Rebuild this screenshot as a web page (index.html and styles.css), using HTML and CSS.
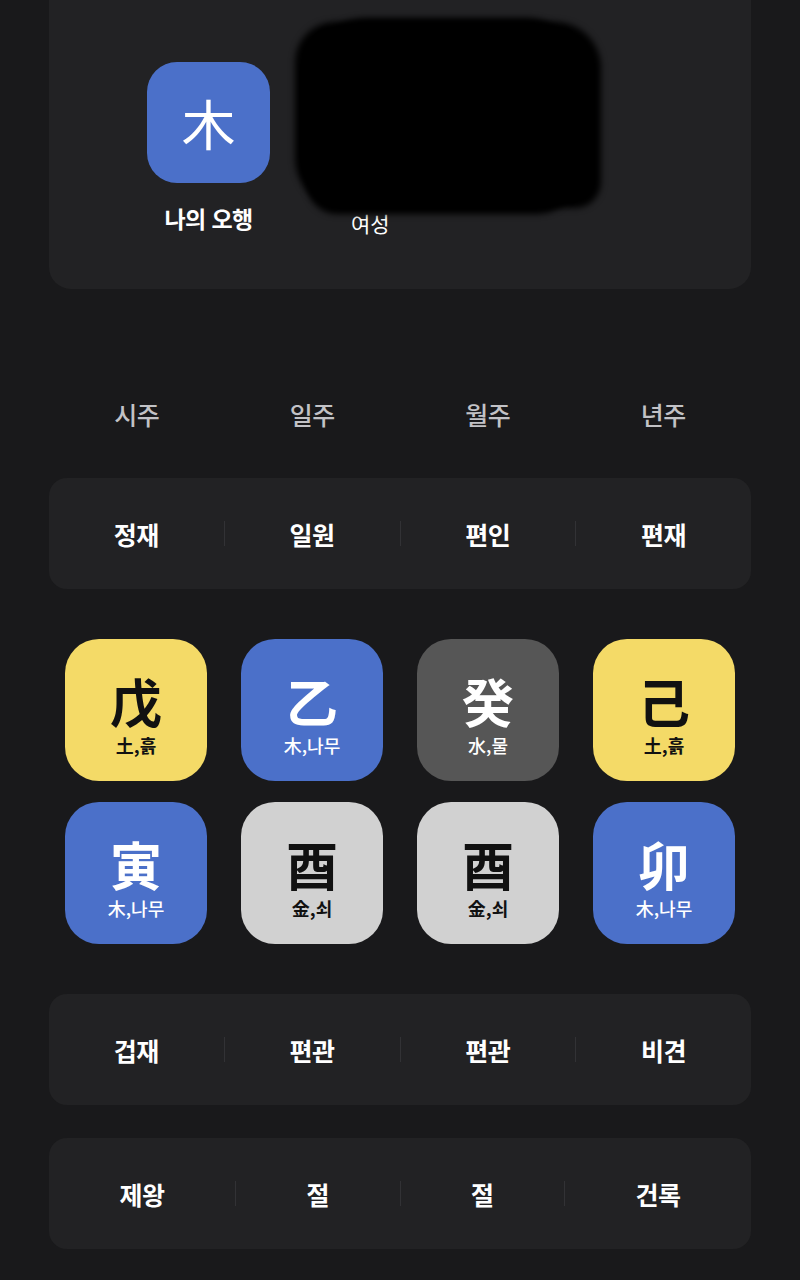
FILE: index.html
```html
<!DOCTYPE html>
<html lang="ko">
<head>
<meta charset="utf-8">
<title>사주</title>
<link rel="stylesheet" href="styles.css">
</head>
<body>
<div class="page">
  <section class="card profile">
    <div class="element">
      <div class="element-badge">木</div>
      <div class="element-label">나의 오행</div>
    </div>
    <div class="person">
      <div class="person-name"><span class="redact"></span><span class="redact redact-b"></span></div>
      <div class="person-gender">여성</div>
    </div>
  </section>

  <div class="pillar-heads">
    <div class="pillar-head">시주</div>
    <div class="pillar-head">일주</div>
    <div class="pillar-head">월주</div>
    <div class="pillar-head">년주</div>
  </div>

  <section class="card row">
    <div class="cell">정재</div><span class="divider"></span>
    <div class="cell">일원</div><span class="divider"></span>
    <div class="cell">편인</div><span class="divider"></span>
    <div class="cell">편재</div>
  </section>

  <div class="grid">
    <div class="tile earth"><div class="tile-char">戊</div><div class="tile-sub">土,흙</div></div>
    <div class="tile wood"><div class="tile-char">乙</div><div class="tile-sub">木,나무</div></div>
    <div class="tile water"><div class="tile-char">癸</div><div class="tile-sub">水,물</div></div>
    <div class="tile earth"><div class="tile-char">己</div><div class="tile-sub">土,흙</div></div>
    <div class="tile wood"><div class="tile-char">寅</div><div class="tile-sub">木,나무</div></div>
    <div class="tile metal"><div class="tile-char">酉</div><div class="tile-sub">金,쇠</div></div>
    <div class="tile metal"><div class="tile-char">酉</div><div class="tile-sub">金,쇠</div></div>
    <div class="tile wood"><div class="tile-char">卯</div><div class="tile-sub">木,나무</div></div>
  </div>

  <section class="card row row-gods">
    <div class="cell">겁재</div><span class="divider"></span>
    <div class="cell">편관</div><span class="divider"></span>
    <div class="cell">편관</div><span class="divider"></span>
    <div class="cell">비견</div>
  </section>

  <section class="card row row-stages">
    <div class="cell">제왕</div><span class="divider"></span>
    <div class="cell">절</div><span class="divider"></span>
    <div class="cell">절</div><span class="divider"></span>
    <div class="cell">건록</div>
  </section>
</div>
</body>
</html>
```

FILE: styles.css
```css
* { box-sizing: border-box; }

html, body {
  margin: 0;
  padding: 0;
  background: #19191b;
}

body {
  font-family: "Noto Sans CJK KR", "Noto Sans", sans-serif;
  color: #ffffff;
  width: 800px;
  min-height: 1280px;
  overflow: hidden;
}

.page {
  padding: 0 49px;
}

.card {
  background: #222224;
  border-radius: 18px;
}

/* profile */
.profile {
  height: 289px;
  border-radius: 0 0 22px 22px;
  display: flex;
  align-items: flex-start;
  padding: 62px 0 0 98px;
}

.element {
  width: 123px;
  display: flex;
  flex-direction: column;
  align-items: center;
}

.element-badge {
  width: 123px;
  height: 121px;
  border-radius: 30px;
  background: #4b70c9;
  display: flex;
  align-items: center;
  justify-content: center;
  font-size: 54px;
  font-weight: 400;
  line-height: 1;
  color: #fff;
}

.element-label {
  margin-top: 20px;
  font-size: 23px;
  font-weight: 700;
  line-height: 30px;
  letter-spacing: -0.6px;
  white-space: nowrap;
}

.person {
  margin-left: 23px;
  display: flex;
  flex-direction: column;
}

.person-name {
  position: relative;
  width: 310px;
  height: 146px;
}

.redact {
  position: absolute;
  left: 2px;
  top: -40px;
  width: 306px;
  height: 186px;
  background: #000;
  border-radius: 40px 46px 26px 50px;
  filter: blur(3px);
}

.redact-b {
  left: 14px;
  top: -44px;
  width: 270px;
  height: 196px;
  border-radius: 60px 50px 40px 30px;
}

.person-gender {
  margin-left: 58px;
  font-size: 21px;
  font-weight: 400;
  line-height: 30px;
}

/* pillar headers */
.pillar-heads {
  margin-top: 100px;
  display: flex;
  height: 50px;
  align-items: center;
}

.pillar-head {
  flex: 1 1 0;
  text-align: center;
  font-size: 25px;
  font-weight: 500;
  color: #c2c2c6;
  letter-spacing: -0.5px;
}

/* rows */
.row {
  height: 111px;
  display: flex;
  align-items: center;
  margin-top: 39px;
}

.cell {
  flex: 1 1 auto;
  text-align: center;
  font-size: 25px;
  font-weight: 700;
  line-height: 32px;
  letter-spacing: -0.5px;
  white-space: nowrap;
}

.divider {
  width: 1px;
  height: 25px;
  background: #323235;
  flex: none;
}

.row-gods { margin-top: 50px; }
.row-stages { margin-top: 33px; }

/* grid */
.grid {
  margin-top: 50px;
  padding: 0 16px;
  display: grid;
  grid-template-columns: repeat(4, 142px);
  column-gap: 34px;
  row-gap: 21px;
}

.tile {
  height: 142px;
  border-radius: 34px;
  display: flex;
  flex-direction: column;
  align-items: center;
  padding-top: 34px;
}

.tile-char {
  font-size: 52px;
  font-weight: 700;
  line-height: 56px;
}

.tile-sub {
  margin-top: 5px;
  font-size: 18px;
  font-weight: 500;
  line-height: 22px;
  white-space: nowrap;
}

.earth { background: #f4da67; color: #111; }
.wood { background: #4b70c9; color: #fff; }
.water { background: #565656; color: #fff; }
.metal { background: #d1d1d1; color: #111; }
.earth .tile-sub, .metal .tile-sub { font-weight: 700; }
```
